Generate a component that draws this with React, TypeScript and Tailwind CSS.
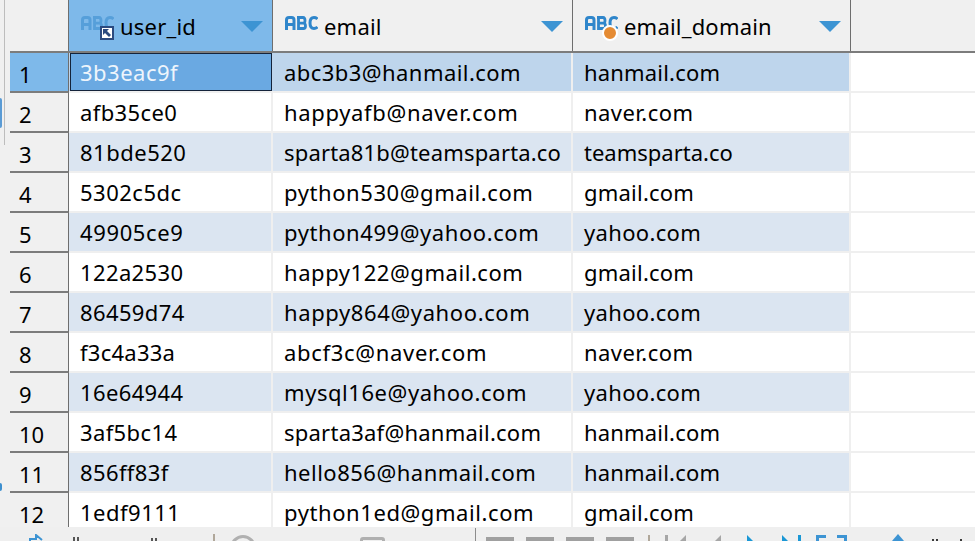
type Cell = [string, number];

const rows: Cell[][] = [
  [["3b3eac9f", 4], ["abc3b3@hanmail.com", 8], ["hanmail.com", 2]],
  [["afb35ce0", 3], ["happyafb@naver.com", 12], ["naver.com", 4]],
  [["81bde520", 4], ["sparta81b@teamsparta.co", 4], ["teamsparta.co", 0]],
  [["5302c5dc", 4], ["python530@gmail.com", 11], ["gmail.com", 2]],
  [["49905ce9", 5], ["python499@yahoo.com", 11], ["yahoo.com", 3]],
  [["122a2530", 3], ["happy122@gmail.com", 10], ["gmail.com", 2]],
  [["86459d74", 3], ["happy864@yahoo.com", 11], ["yahoo.com", 3]],
  [["f3c4a33a", 2], ["abcf3c@naver.com", 11], ["naver.com", 4]],
  [["16e64944", 3], ["mysql16e@yahoo.com", 10], ["yahoo.com", 3]],
  [["3af5bc14", 3], ["sparta3af@hanmail.com", 5], ["hanmail.com", 2]],
  [["856ff83f", 3], ["hello856@hanmail.com", 10], ["hanmail.com", 2]],
  [["1edf9111", 4], ["python1ed@gmail.com", 11], ["gmail.com", 2]],
];

const spacing = ([text, extra]: Cell) => ({ letterSpacing: `${extra / text.length}px` });

function Abc({ faded }: { faded?: boolean }) {
  return (
    <svg width="33" height="14" viewBox="0 0 33 14" className={faded ? "opacity-50" : ""} fill="none" stroke="#2f86cb" strokeWidth="3">
      <path d="M1.500 14V4Q1.500 1.500 4 1.500H6.500Q9 1.500 9 4V14M1.500 8.500H9" />
      <path d="M13.500 1.500V12.500H18.500Q20.500 12.500 20.500 10.300Q20.500 7.200 18.500 7.200H13.500M18.500 7.200Q20 7.200 20 4.500Q20 1.500 18 1.500H12" strokeWidth="2.800" />
      <path d="M32.500 3Q31 1.500 29 1.500Q25 1.500 25 7Q25 12.500 29 12.500Q31 12.500 32.500 11" />
    </svg>
  );
}

function Arrow() {
  return (
    <svg width="22" height="11" viewBox="0 0 22 11" className="shrink-0">
      <path d="M0 0H22L11 11Z" fill="#3d94d3" />
    </svg>
  );
}

function Header({ name, width, active, overlay }: { name: string; width: string; active?: boolean; overlay?: "link" | "dot" }) {
  return (
    <div className={`${width} shrink-0 h-full flex items-center justify-between pl-[12px] pr-[9px] border-r border-r-[#6e6e6e] ${active ? "bg-[#7eb9ea]" : ""}`}>
      <div className="flex items-center">
        <div className="relative w-[39px] h-[30px] pt-[6px] shrink-0 -mt-[1px]">
          <Abc faded={active} />
          {overlay === "link" && (
            <div className="absolute left-[19px] top-[16px] w-[14px] h-[14px] bg-white border-2 border-[#2b4a7f] flex items-center justify-center">
              <svg width="8" height="8" viewBox="0 0 8 8"><path d="M0 0H6L4 2 8 6 6 8 2 4 0 6Z" fill="#2b4a7f" /></svg>
            </div>
          )}
          {overlay === "dot" && (
            <div className="absolute left-[17px] top-[15px] w-[16px] h-[16px] rounded-full bg-[#e58b33] border-2 border-white" />
          )}
        </div>
        <span className="leading-[30px] text-[22px] tracking-[0.2px] text-black">{name}</span>
      </div>
      <div className="mt-[1px]"><Arrow /></div>
    </div>
  );
}

function Block() {
  return <div className="w-[28px] h-[5px] bg-[#a0a0a0] shrink-0" />;
}

function Tri({ color, className }: { color: string; className: string }) {
  return (
    <svg width="6" height="6" viewBox="0 0 6 6" className={`shrink-0 ${className}`}>
      <path d="M0 0L6 6H0Z" fill={color} />
    </svg>
  );
}

export default function App() {
  return (
    <div className="w-[975px] h-[541px] overflow-hidden bg-[#f0f0f0] flex flex-col font-['Noto_Sans','Open_Sans',sans-serif]">
      <div className="flex flex-1 min-h-0">
        <div className="w-[10px] shrink-0 bg-[#f0f0f0] relative">
          <div className="absolute left-[4px] top-0 w-[1px] h-[145px] bg-[#bdbdbd]" />
          <div className="absolute left-0 top-[98px] w-[2px] h-[30px] bg-[#5a9bd5] rounded-r-sm" />
          <div className="absolute left-0 top-[483px] w-[2px] h-[8px] bg-[#3d8fcf] rounded-r-sm" />
        </div>
        <div className="flex-1 min-w-0 flex flex-col">
          <div className="h-[53px] shrink-0 flex border-b-2 border-b-[#7c7c7c] bg-[#f0f0f0]">
            <div className="w-[59px] shrink-0 h-full border-r border-r-[#6e6e6e]" />
            <Header name="user_id" width="w-[204px]" active overlay="link" />
            <Header name="email" width="w-[300px]" />
            <Header name="email_domain" width="w-[278px]" overlay="dot" />
          </div>
          <div className="flex-1 min-h-0 overflow-hidden bg-white">
            {rows.map((r, i) => {
              const selected = i === 0;
              const band = selected ? "bg-[#bed5ec]" : i % 2 === 0 ? "bg-[#dbe5f1]" : "bg-white";
              return (
                <div key={i} className="flex h-[40px] text-[22px] leading-[40px] text-black">
                  <div className={`w-[59px] shrink-0 pl-[9px] pt-[1px] border-r border-r-[#6e6e6e] border-b-2 border-b-[#7c7c7c] ${selected ? "bg-[#7eb9ea]" : "bg-[#f0f0f0]"}`}>
                    {i + 1}
                  </div>
                  {selected ? (
                    <div className="w-[204px] shrink-0 h-[40px] pr-[1px] pl-[1px] bg-[#bed5ec] border-b-2 border-[#efefef]">
                      <div className="h-[38px] pl-[9px] bg-[#6aa9e2] text-[#eef5fc] border border-[#14233a] leading-[36px]" style={spacing(r[0])}>{r[0][0]}</div>
                    </div>
                  ) : (
                    <div className={`w-[204px] shrink-0 pl-[11px] border-r-2 border-b-2 border-[#efefef] leading-[38px] ${band}`} style={spacing(r[0])}>{r[0][0]}</div>
                  )}
                  <div className={`w-[300px] shrink-0 pl-[11px] border-r-2 border-b-2 border-[#efefef] leading-[38px] ${band}`} style={spacing(r[1])}>{r[1][0]}</div>
                  <div className={`w-[278px] shrink-0 pl-[11px] border-r-2 border-b-2 border-[#efefef] leading-[38px] ${band}`} style={spacing(r[2])}>{r[2][0]}</div>
                  <div className="flex-1 border-b-2 border-[#efefef]" />
                </div>
              );
            })}
          </div>
        </div>
      </div>
      <div className="h-[14px] shrink-0 bg-[#efefef] flex items-start overflow-hidden">
        <svg width="16" height="8" viewBox="0 0 16 8" className="ml-[28px] mt-[7px] shrink-0" fill="none" stroke="#3d94d3" strokeWidth="2"><path d="M2 8V5H8V1L14 6" /></svg>
        <div className="ml-[29px] mt-[10px] w-[6px] h-[4px] border-x-2 border-[#555555] shrink-0" />
        <div className="ml-[72px] mt-[11px] w-[6px] h-[3px] border-x-2 border-[#555555] shrink-0" />
        <div className="ml-[56px] mt-[7px] w-[2px] h-[7px] bg-[#b0a79a] shrink-0" />
        <div className="ml-[15px] mt-[8px] w-[26px] h-[26px] rounded-full border-[3px] border-[#b0b0b0] shrink-0" />
        <div className="ml-[104px] mt-[10px] w-[25px] h-[20px] rounded-[3px] border-[3px] border-[#b0b0b0] shrink-0" />
        <div className="ml-[90px] mt-[1px] w-[1px] h-[13px] bg-[#8c8c8c] shrink-0" />
        <div className="ml-[10px] mt-[10px] flex gap-[12px] shrink-0">
          <Block /><Block /><Block /><Block />
        </div>
        <div className="ml-[14px] mt-[8px] w-[2px] h-[6px] bg-[#b0a79a] shrink-0" />
        <div className="ml-[15px] mt-[8px] w-[3px] h-[6px] bg-[#a6a6a6] shrink-0" />
        <Tri color="#a6a6a6" className="ml-[12px] mt-[8px] -scale-x-100" />
        <Tri color="#a6a6a6" className="ml-[29px] mt-[8px] -scale-x-100" />
        <Tri color="#1a97d5" className="ml-[26px] mt-[8px]" />
        <Tri color="#1a97d5" className="ml-[29px] mt-[8px]" />
        <div className="ml-[10px] mt-[8px] w-[3px] h-[6px] bg-[#1a97d5] shrink-0" />
        <div className="ml-[15px] mt-[8px] w-[10px] h-[8px] border-l-[3px] border-t-[3px] border-[#3d94d3] shrink-0" />
        <div className="ml-[11px] mt-[8px] w-[10px] h-[8px] border-r-[3px] border-t-[3px] border-[#3d94d3] shrink-0" />
        <svg width="12" height="7" viewBox="0 0 12 7" className="ml-[45px] mt-[7px] shrink-0"><path d="M6 0L12 7H0Z" fill="#3d94d3" /></svg>
        <div className="ml-[28px] mt-[12px] w-[6px] h-[2px] border-x-2 border-[#3a3a3a] shrink-0" />
        <div className="ml-[22px] mt-[12px] w-[2px] h-[2px] bg-[#3a3a3a] shrink-0" />
      </div>
    </div>
  );
}
